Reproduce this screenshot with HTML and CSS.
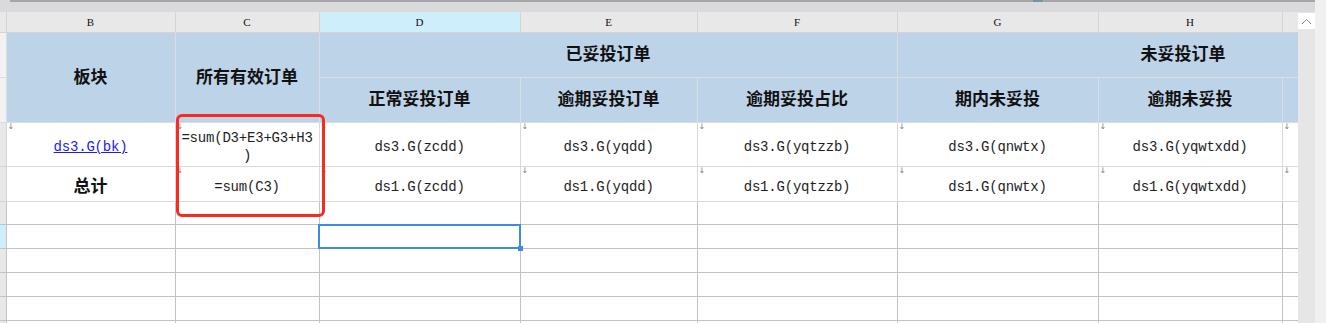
FILE: index.html
```html
<!DOCTYPE html>
<html>
<head>
  <title>订单报表设计</title>
  <link rel="stylesheet" href="styles.css">
</head>
<body>
  <div class="app">
    <div class="sheet">
      <div class="topbar">
        <div class="track"><div class="thumb"></div></div>
      </div>
      <div class="sheetBody">
        <div class="grid">
          <table class="cells">
            <colgroup>
              <col class="w-rh">
              <col class="w-b">
              <col class="w-c">
              <col class="w-d">
              <col class="w-e">
              <col class="w-f">
              <col class="w-g">
              <col class="w-h">
              <col class="w-i">
            </colgroup>
            <tr class="letters">
              <th class="rh"></th>
              <th>B</th>
              <th>C</th>
              <th class="current">D</th>
              <th>E</th>
              <th>F</th>
              <th>G</th>
              <th>H</th>
              <th></th>
            </tr>
            <tr class="head head1">
              <td class="rh"></td>
              <td rowspan="2">板块</td>
              <td rowspan="2">所有有效订单</td>
              <td colspan="3">已妥投订单</td>
              <td colspan="3">未妥投订单</td>
            </tr>
            <tr class="head head2">
              <td class="rh"></td>
              <td>正常妥投订单</td>
              <td>逾期妥投订单</td>
              <td>逾期妥投占比</td>
              <td>期内未妥投</td>
              <td>逾期未妥投</td>
              <td></td>
            </tr>
            <tr class="data r3">
              <td class="rh"></td>
              <td class="mark"><a href="#">ds3.G(bk)</a></td>
              <td class="mark formula">=sum(D3+E3+G3+H3)</td>
              <td class="mark">ds3.G(zcdd)</td>
              <td class="mark">ds3.G(yqdd)</td>
              <td class="mark">ds3.G(yqtzzb)</td>
              <td class="mark">ds3.G(qnwtx)</td>
              <td class="mark">ds3.G(yqwtxdd)</td>
              <td class="mark"></td>
            </tr>
            <tr class="data r4">
              <td class="rh"></td>
              <td class="total">总计</td>
              <td class="mark">=sum(C3)</td>
              <td class="mark">ds1.G(zcdd)</td>
              <td class="mark">ds1.G(yqdd)</td>
              <td class="mark">ds1.G(yqtzzb)</td>
              <td class="mark">ds1.G(qnwtx)</td>
              <td class="mark">ds1.G(yqwtxdd)</td>
              <td class="mark"></td>
            </tr>
            <tr class="blank first">
              <td class="rh"></td><td></td><td></td><td></td><td></td><td></td><td></td><td></td><td></td>
            </tr>
            <tr class="blank">
              <td class="rh current"></td><td></td><td></td><td class="selected"></td><td></td><td></td><td></td><td></td><td></td>
            </tr>
            <tr class="blank">
              <td class="rh"></td><td></td><td></td><td></td><td></td><td></td><td></td><td></td><td></td>
            </tr>
            <tr class="blank">
              <td class="rh"></td><td></td><td></td><td></td><td></td><td></td><td></td><td></td><td></td>
            </tr>
            <tr class="blank">
              <td class="rh"></td><td></td><td></td><td></td><td></td><td></td><td></td><td></td><td></td>
            </tr>
            <tr class="blank">
              <td class="rh"></td><td></td><td></td><td></td><td></td><td></td><td></td><td></td><td></td>
            </tr>
          </table>
        </div>
        <div class="vscroll">
          <div class="upBtn">
            <svg width="11" height="7" viewBox="0 0 11 7"><path d="M1 6 L5.5 1.5 L10 6" fill="none" stroke="#8a8a8a" stroke-width="1"/></svg>
          </div>
        </div>
      </div>
      <div class="callout"></div>
    </div>
    <div class="edge"></div>
  </div>
</body>
</html>
```

FILE: styles.css
```css
* {
  margin: 0;
  padding: 0;
  box-sizing: border-box;
}

body {
  background: #f0f0f0;
  font-family: "Liberation Mono", "Noto Sans CJK SC", monospace;
}

.app {
  display: flex;
  width: 1326px;
  height: 323px;
  overflow: hidden;
}

.sheet {
  position: relative;
  width: 1315px;
  display: flex;
  flex-direction: column;
}

.topbar {
  height: 12px;
  background: #dadadc;
  padding-left: 10px;
}

.track {
  height: 2px;
  background: #a6a6a6;
  display: flex;
}

.thumb {
  margin-left: 1023px;
  width: 10px;
  background: #6f98a4;
}

.sheetBody {
  display: flex;
  flex: 1;
  min-height: 0;
}

.grid {
  width: 1298px;
  overflow: hidden;
  background: #fff;
}

.vscroll {
  width: 17px;
  background: #e6e6e6;
  padding-top: 1px;
}

.upBtn {
  height: 16px;
  background: #fff;
  display: flex;
  align-items: center;
  justify-content: center;
}

.edge {
  width: 11px;
  background: #f0f0f0;
}

/* table */
.cells {
  border-collapse: collapse;
  table-layout: fixed;
  width: 1469px;
}

.w-rh { width: 6px; }
.w-b { width: 169px; }
.w-c { width: 144px; }
.w-d { width: 201px; }
.w-e { width: 177px; }
.w-f { width: 200px; }
.w-g { width: 201px; }
.w-h { width: 184px; }
.w-i { width: 187px; }

.cells td, .cells th {
  border: 1px solid #dadada;
  padding: 0 3px;
  text-align: center;
  vertical-align: middle;
  font-size: 14px;
  letter-spacing: -0.2px;
  font-weight: normal;
  color: #1e1e1e;
  white-space: nowrap;
}

.cells .rh {
  padding: 0;
  border-left: none;
  background: #e8e8e8;
  border-color: #d4d4d4;
}

.letters th {
  height: 20px;
  border-top: none;
  background: #e8e8e8;
  border-color: #d4d4d4;
  font-family: "Liberation Serif", serif;
  font-size: 11px;
  letter-spacing: 0;
  color: #111;
}

.letters th.current {
  background: #cdeefa;
}

.head td {
  background: #bdd3e8;
  border-color: #d8dee5;
  padding-bottom: 4px;
  font-family: "Noto Sans CJK SC", sans-serif;
  font-weight: bold;
  font-size: 17px;
  letter-spacing: 0;
  color: #111;
}

.head td.rh {
  background: #f2f2f2;
  border-color: #dcdcdc;
}

.head1 td { height: 45px; }
.head2 td { height: 45px; }

.data td {
  padding-top: 6px;
}

.r3 td { height: 44px; }
.r4 td { height: 35px; }

.data a {
  color: #1a1aff;
  text-decoration: underline;
}

.data .formula {
  white-space: normal;
  word-break: break-all;
  line-break: anywhere;
  line-height: 18px;
}

.data .total {
  padding-top: 2px;
  font-family: "Noto Sans CJK SC", sans-serif;
  font-weight: bold;
  font-size: 17px;
  letter-spacing: 0;
  color: #111;
}

.mark {
  position: relative;
}

.mark::before {
  content: "\2193";
  position: absolute;
  top: 0;
  left: 1px;
  font-family: "DejaVu Sans", sans-serif;
  font-size: 8px;
  line-height: 7px;
  letter-spacing: 0;
  color: #7c7c7c;
}

.blank td {
  height: 24px;
  border-color: #c2c2c2;
}

.blank.first td { height: 23px; }

.blank .rh {
  border-color: #c2c2c2;
}

.blank .rh.current {
  background: #cdeefa;
}

.selected {
  position: relative;
}

.selected::after {
  content: "";
  position: absolute;
  top: -1px;
  left: -2px;
  right: -1px;
  bottom: -1px;
  border: 2px solid #3a8de6;
}

.selected::before {
  content: "";
  position: absolute;
  right: -3px;
  bottom: -3px;
  width: 5px;
  height: 5px;
  background: #3a8de6;
  z-index: 1;
}

/* red annotation box round column C */
.callout {
  position: absolute;
  left: 176px;
  top: 114px;
  width: 149px;
  height: 103px;
  border: 3px solid #fb2a20;
  border-radius: 6px;
}
```
